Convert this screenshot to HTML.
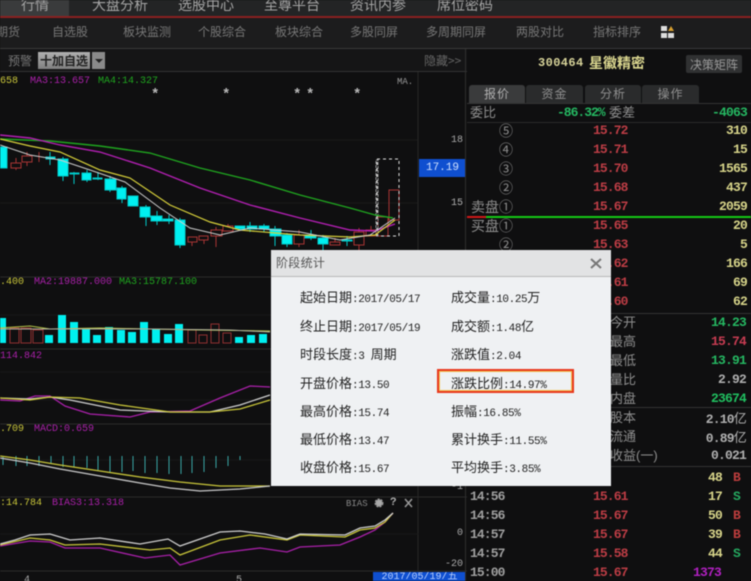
<!DOCTYPE html>
<html><head><meta charset="utf-8"><style>
html,body{margin:0;padding:0;background:#0f0f10;}
#p{position:relative;width:751px;height:581px;overflow:hidden;background:#0f0f10;font-family:"Liberation Mono","WenQuanYi Zen Hei","Noto Sans CJK SC",monospace;filter:blur(.5px);}
.a{position:absolute;}
.t{position:absolute;line-height:16px;height:16px;white-space:nowrap;font-size:11px;}
.n{color:#777;font-family:"Liberation Sans","Noto Sans CJK SC",sans-serif;font-size:12px;}
.nv{top:24px;}
.top{top:-3px;color:#a5a5a5;font-family:"Liberation Sans","Noto Sans CJK SC",sans-serif;font-size:14px;}
.r{color:#bd3d45;font-weight:bold;font-size:13px;letter-spacing:-.9px;left:593px;}
.y{color:#d8d58a;font-weight:bold;font-size:13px;letter-spacing:-.8px;text-align:right;right:4px;}
.l{color:#8e8e8e;font-family:"Liberation Sans","Noto Sans CJK SC",sans-serif;font-size:13px;}
.c{color:#8e8e8e;left:499px;font-family:"Liberation Sans","Noto Sans CJK SC",sans-serif;font-size:14px;}
.g{color:#25b862;font-weight:bold;font-size:13px;letter-spacing:-.8px;text-align:right;right:5px;}
.w{color:#b0b0b0;font-weight:bold;font-size:13px;letter-spacing:-.8px;text-align:right;right:5px;}
.tm{color:#a0a0a0;left:470px;font-size:13px;letter-spacing:-.9px;font-weight:bold;}
.d{color:#222;font-size:11px;font-family:"Liberation Mono",monospace;letter-spacing:-.4px;}
.d i{font-style:normal;font-weight:normal;font-size:13px;letter-spacing:0;font-family:"Noto Sans CJK SC",sans-serif;}
.tb{position:absolute;top:85px;height:18px;background:#2a2b2c;border-radius:3px 3px 0 0;color:#8f8f8f;font:12px/18px "Liberation Sans","Noto Sans CJK SC",sans-serif;text-align:center;letter-spacing:1px;}
.s{color:#d8d58a;font-weight:bold;font-size:13px;letter-spacing:-.8px;left:708px;}
.b{color:#bd3d3d;font-weight:bold;font-size:13px;left:733px;}
.q{color:#25a860;font-weight:bold;font-size:13px;left:733px;}
.st{color:#bbb;font-size:14px;font-weight:bold;top:87px;}
</style></head><body><div id="p">
<div class="a" style="left:0;top:0;width:751px;height:16px;background:#232425"></div>
<div class="a" style="left:0;top:0;width:69px;height:16px;background:#3a3b3c"></div>
<div class="a" style="left:0;top:16px;width:751px;height:2px;background:#8a2020"></div>
<div class="a" style="left:0;top:18px;width:751px;height:30px;background:#1c1c1d"></div>
<div class="a" style="left:0;top:48px;width:751px;height:1px;background:#3a3a3a"></div>
<div class="a" style="left:0;top:49px;width:467px;height:22px;background:#151516"></div>
<div class="a" style="left:0;top:71px;width:467px;height:1px;background:#333"></div>

<span class="t top" style="left:21px">行情</span>
<span class="t top" style="left:92px">大盘分析</span>
<span class="t top" style="left:178px">选股中心</span>
<span class="t top" style="left:264px">至尊平台</span>
<span class="t top" style="left:350px">资讯内参</span>
<span class="t top" style="left:437px">席位密码</span>

<span class="t n nv" style="left:-4px">期货</span>
<span class="t n nv" style="left:52px">自选股</span>
<span class="t n nv" style="left:123px">板块监测</span>
<span class="t n nv" style="left:198px">个股综合</span>
<span class="t n nv" style="left:275px">板块综合</span>
<span class="t n nv" style="left:350px">多股同屏</span>
<span class="t n nv" style="left:426px">多周期同屏</span>
<span class="t n nv" style="left:516px">两股对比</span>
<span class="t n nv" style="left:593px">指标排序</span>
<svg class="a" style="left:660px;top:25px" width="15" height="15"><rect x="1" y="1" width="6" height="5" fill="#ddd"/><rect x="1" y="8" width="6" height="5" fill="#ddd"/><rect x="8" y="8" width="6" height="5" fill="#ddd"/><path d="M8 6h6L11 1z" fill="#d8a030"/></svg>

<span class="t" style="left:8px;top:53px;color:#777;font-size:12px;font-family:'Noto Sans CJK SC',sans-serif">预警</span>
<div class="a" style="left:38px;top:52px;width:52px;height:17px;background:linear-gradient(#b0b0b0,#808080);color:#222;font:bold 12px/17px 'Noto Sans CJK SC',sans-serif;text-align:center">十加自选</div>
<div class="a" style="left:92px;top:52px;width:13px;height:17px;background:#8a8a8a"></div>
<div class="a" style="left:95px;top:59px;width:0;height:0;border:4px solid transparent;border-top:4px solid #222"></div>
<span class="t" style="left:424px;top:53px;color:#666;font-size:12px;font-family:'Noto Sans CJK SC',sans-serif">隐藏&gt;&gt;</span>

<!-- chart -->
<svg class="a" style="left:0;top:72px" width="467" height="509" viewBox="0 72 467 509">
<g stroke="#1a1a1a"><path d="M0 140H418M0 203H418"/><path d="M418 72V581" stroke="#262626"/></g>
<g stroke="#2a2a2a"><path d="M0 277H467M0 349H467M0 424H467M0 497H467M0 571H467"/></g>
<g stroke="#181818"><path d="M0 315H418M0 372H418M0 400H418M0 460H418M0 534H418"/></g>
<g fill="#00f0f0" stroke="#00c8c8">
<path d="M50 152V165M63 157V181M74 172V184M87 170V182M98 172V180M110 176V192M122 186V203M146 205V226M157 211V225M169 215V224M180 218V248M250 222V232M264 224V232M275 226V246M287 233V247M311 230V240M323 235V250M347 236V246" fill="none"/>
<rect x="0" y="147" width="7" height="21"/><rect x="46" y="157" width="9" height="2"/><rect x="58" y="159" width="10" height="17"/><rect x="70" y="173" width="9" height="1"/><rect x="82" y="173" width="9" height="7"/><rect x="93" y="178" width="9" height="1"/><rect x="105" y="179" width="11" height="11"/><rect x="117" y="188" width="9" height="11"/><rect x="128" y="196" width="10" height="10"/><rect x="140" y="207" width="10" height="10"/><rect x="151" y="216" width="11" height="5"/><rect x="163" y="219" width="10" height="2"/><rect x="175" y="220" width="10" height="25"/><rect x="235" y="226" width="10" height="3"/><rect x="247" y="226" width="10" height="3"/><rect x="259" y="226" width="10" height="3"/><rect x="270" y="229" width="11" height="7"/><rect x="282" y="235" width="10" height="9"/><rect x="305" y="235" width="11" height="3"/><rect x="318" y="238" width="10" height="6"/><rect x="342" y="240" width="10" height="1"/>
</g>
<g fill="none" stroke="#a83434">
<path d="M16 158V163M16 168V170M27 152V156M27 162V166M39 152V162M216 227V230M216 236V247M192 242V246M204 240V244M228 224V226M299 230V235M299 244V247M335 238V242M359 228V232M359 245V250M371 226V230"/>
<rect x="11" y="163" width="10" height="5"/><rect x="22" y="156" width="10" height="6"/><rect x="188" y="237" width="9" height="5"/><rect x="199" y="236" width="9" height="4"/><rect x="211" y="230" width="11" height="6"/><rect x="223" y="226" width="10" height="5"/><rect x="294" y="235" width="10" height="9"/><rect x="330" y="242" width="10" height="3"/><rect x="354" y="232" width="10" height="13"/><rect x="366" y="230" width="10" height="6"/><rect x="378" y="217" width="10" height="19"/><rect x="389" y="190" width="10" height="30"/>
</g>
<rect x="377" y="159" width="22" height="77" fill="none" stroke="#ddd" stroke-dasharray="3 3"/>
<rect x="376" y="160" width="2" height="76" fill="none" stroke="#999" stroke-dasharray="3 1"/>
<g fill="none" stroke-width="1.2">
<polyline stroke="#1fa51f" stroke-width="1.4" points="0,139 50,141 100,146 150,153 200,168 250,180 300,195 350,208 375,215 393,218"/>
<polyline stroke="#b31fb3" stroke-width="1.4" points="0,135 30,138 60,145 100,152 150,168 200,188 250,205 300,218 350,230 375,231 395,224"/>
<polyline stroke="#d6cf3a" points="0,139 30,146 60,152 100,170 130,178 170,205 210,222 240,230 300,235 350,237 375,235 395,220"/>
<polyline stroke="#cccccc" stroke-width="1" points="0,145 30,155 60,160 90,170 125,182 160,208 190,228 220,235 250,228 300,232 340,240 370,235 395,218"/>
</g>
<!-- volume -->
<g fill="#00f0f0">
<rect x="0" y="318" width="6" height="25"/><rect x="45" y="335" width="8" height="8"/><rect x="58" y="315" width="8" height="28"/><rect x="70" y="322" width="8" height="21"/><rect x="82" y="328" width="8" height="15"/><rect x="93" y="335" width="8" height="8"/><rect x="105" y="327" width="8" height="16"/><rect x="117" y="330" width="8" height="13"/><rect x="128" y="332" width="8" height="11"/><rect x="140" y="322" width="8" height="21"/><rect x="152" y="329" width="8" height="14"/><rect x="164" y="334" width="8" height="9"/><rect x="175" y="324" width="8" height="19"/><rect x="235" y="337" width="8" height="6"/><rect x="247" y="335" width="8" height="8"/><rect x="259" y="334" width="8" height="9"/>
</g>
<g fill="none" stroke="#8f3030"><rect x="10" y="328" width="9" height="15"/><rect x="21" y="328" width="10" height="15"/><rect x="33" y="330" width="10" height="13"/><rect x="188" y="330" width="8" height="13"/><rect x="199" y="335" width="8" height="8"/><rect x="211" y="324" width="8" height="19"/><rect x="223" y="333" width="8" height="10"/></g>
<polyline fill="none" stroke="#b9c84a" points="0,328 30,326 50,329 100,328 150,329 200,330 270,331"/>
<polyline fill="none" stroke="#b0b0a0" points="0,329 50,329 100,329 150,329 230,330 270,332"/>
<!-- KDJ -->
<g fill="none" stroke-width="1.3">
<polyline stroke="#a920a9" points="0,400 20,401 35,396 50,396 65,406 90,414 130,417 150,412 190,411 220,398 250,386 270,387"/>
<polyline stroke="#cfcfcf" points="0,398 30,399 50,397 70,400 120,410 170,412 210,412 240,405 270,395"/>
<polyline stroke="#c9c63a" points="0,398 30,400 50,397 80,398 120,405 170,412 210,412 240,409 270,400"/>
</g>
<!-- MACD -->
<path stroke="#3aa5a5" fill="none" d="M3 456V465M16 456V466M27 456V466M39 456V466M51 456V464M63 456V467M74 456V467M87 456V468M98 456V470M110 456V472M122 456V472M133 456V471M145 456V473M157 456V473M169 456V474M181 456V474M192 456V473M204 456V472M216 456V468M228 456V466M240 456V460"/>
<g fill="none" stroke-width="1.3">
<polyline stroke="#c9c63a" points="0,456 30,460 60,465 100,471 140,477 180,482 220,486 270,486"/>
<polyline stroke="#c8c8c8" points="0,458 30,463 60,469 100,476 140,483 170,488 200,491 240,489 270,486"/>
</g>
<!-- BIAS -->
<g fill="none" stroke-width="1.3">
<polyline stroke="#a920a9" points="0,546 30,541 50,542 65,548 100,548 145,558 170,555 180,565 220,553 260,548 287,552 300,547 340,545 360,537 375,530 385,522 393,513"/>
<polyline stroke="#c9c63a" points="0,545 30,538 50,540 65,545 100,544 150,550 170,548 180,555 220,540 250,535 287,540 300,535 345,537 360,530 375,528 385,522 393,513"/>
<polyline stroke="#cfcfcf" points="0,544 15,540 30,535 50,534 70,540 100,538 140,544 168,539 180,546 220,532 240,531 265,534 287,539 300,534 345,535 360,528 375,526 385,520 393,513"/>
</g>
<g stroke="#999" fill="none" stroke-width="1.5"><path d="M405 499L412 507M412 499L405 507"/></g>
<circle cx="379" cy="503" r="3.5" fill="#aaa" stroke="#999" stroke-width="2" stroke-dasharray="2 1"/>
</svg>

<!-- chart labels -->
<span class="t" style="left:0;top:74px;color:#c9c63a;font-size:10px">658</span>
<span class="t" style="left:30px;top:74px;color:#a920a9;font-size:10px">MA3:13.657</span>
<span class="t" style="left:98px;top:74px;color:#1fa51f;font-size:10px">MA4:14.327</span>
<span class="t st" style="left:151px">*</span>
<span class="t st" style="left:222px">*</span>
<span class="t st" style="left:293px">*</span>
<span class="t st" style="left:306px">*</span>
<span class="t st" style="left:353px">*</span>
<span class="t" style="left:397px;top:74px;color:#999;font-size:9px">MA.</span>
<span class="t" style="left:451px;top:133px;color:#a8a8a8;font-size:10px">18</span>
<span class="t" style="left:451px;top:196px;color:#b0b0b0;font-size:10px">15</span>
<div class="a" style="left:419px;top:159px;width:47px;height:18px;background:#0f4fd0;color:#cfe0ff;font-size:11px;line-height:18px;text-align:center">17.19</div>
<span class="t" style="left:0;top:275px;color:#c9c63a;font-size:10px">.400</span>
<span class="t" style="left:34px;top:275px;color:#a920a9;font-size:10px">MA2:19887.000</span>
<span class="t" style="left:119px;top:275px;color:#1fa51f;font-size:10px">MA3:15787.100</span>
<span class="t" style="left:0;top:349px;color:#a920a9;font-size:10px">114.842</span>
<span class="t" style="left:0;top:422px;color:#c9c63a;font-size:10px">.709</span>
<span class="t" style="left:34px;top:422px;color:#a920a9;font-size:10px">MACD:0.659</span>
<span class="t" style="left:0;top:496px;color:#c9c63a;font-size:10px">:14.784</span>
<span class="t" style="left:52px;top:496px;color:#a920a9;font-size:10px">BIAS3:13.318</span>
<span class="t" style="left:346px;top:496px;color:#888;font-size:9px">BIAS</span>
<span class="t" style="left:390px;top:495px;color:#aaa;font-weight:bold;font-size:11px">?</span>
<span class="t" style="left:24px;top:573px;color:#aaa;font-size:10px">4</span>
<span class="t" style="left:236px;top:573px;color:#aaa;font-size:10px">5</span>
<span class="t" style="left:451px;top:480px;color:#aaa;font-size:10px">-1</span>
<span class="t" style="left:457px;top:526px;color:#aaa;font-size:10px">0</span>
<span class="t" style="left:445px;top:557px;color:#aaa;font-size:10px">-20</span>
<div class="a" style="left:373px;top:572px;width:93px;height:9px;background:#0f4fd0;color:#b8d0ff;font:10px/12px 'Liberation Mono','Noto Sans CJK SC',monospace;text-align:center;overflow:hidden">2017/05/19/五</div>

<!-- right panel -->
<div class="a" style="left:465px;top:49px;width:1px;height:532px;background:#2e2e2e"></div>
<span class="t" style="left:538px;top:55px;color:#d8d49a;font-weight:bold;font-size:12px;letter-spacing:.4px">300464</span>
<span class="t" style="left:589px;top:55px;color:#dcd890;font-weight:bold;font-size:14px;font-family:'Noto Sans CJK SC',sans-serif">星徽精密</span>
<div class="a" style="left:686px;top:55px;width:56px;height:18px;background:#303132;border-radius:2px;color:#999;font:12px/19px 'Noto Sans CJK SC',sans-serif;text-align:center">决策矩阵</div>
<div class="tb" style="left:469px;width:56px;background:#3a3b3c;color:#b0b0b0">报价</div>
<div class="tb" style="left:526px;width:57px">资金</div>
<div class="tb" style="left:585px;width:56px">分析</div>
<div class="tb" style="left:642px;width:57px">操作</div>
<div class="a" style="left:467px;top:103px;width:284px;height:1px;background:#333"></div>
<div class="a" style="left:467px;top:122px;width:284px;height:1px;background:#2a2a2a"></div>

<span class="t c" style="left:470px;top:105px;font-size:13px">委比</span>
<span class="t" style="left:557px;top:105px;color:#25b862;font-weight:bold;font-size:13px;letter-spacing:-1px">-86.32%</span>
<span class="t c" style="left:609px;top:105px;font-size:13px">委差</span>
<span class="t g" style="right:4px;top:105px">-4063</span>

<span class="t c" style="top:123px">⑤</span><span class="t r" style="top:123px">15.72</span><span class="t y" style="top:123px">310</span>
<span class="t c" style="top:142px">④</span><span class="t r" style="top:142px">15.71</span><span class="t y" style="top:142px">15</span>
<span class="t c" style="top:161px">③</span><span class="t r" style="top:161px">15.70</span><span class="t y" style="top:161px">1565</span>
<span class="t c" style="top:180px">②</span><span class="t r" style="top:180px">15.68</span><span class="t y" style="top:180px">437</span>
<span class="t c" style="left:471px;top:199px">卖盘①</span><span class="t r" style="top:199px">15.67</span><span class="t y" style="top:199px">2059</span>
<div class="a" style="left:467px;top:216px;width:284px;height:2px;background:#14c814"></div>
<div class="a" style="left:467px;top:216px;width:19px;height:2px;background:#d01818"></div>
<span class="t c" style="left:471px;top:218px">买盘①</span><span class="t r" style="top:218px">15.65</span><span class="t y" style="top:218px">20</span>
<span class="t c" style="top:237px">②</span><span class="t r" style="top:237px">15.63</span><span class="t y" style="top:237px">5</span>
<span class="t r" style="top:256px">15.62</span><span class="t y" style="top:256px">166</span>
<span class="t r" style="top:275px">15.61</span><span class="t y" style="top:275px">69</span>
<span class="t r" style="top:294px">15.60</span><span class="t y" style="top:294px">62</span>
<div class="a" style="left:467px;top:313px;width:284px;height:1px;background:#333"></div>

<span class="t l" style="left:610px;top:315px">今开</span><span class="t g" style="top:315px">14.23</span>
<span class="t l" style="left:610px;top:334px">最高</span><span class="t g" style="top:334px;color:#c83c52">15.74</span>
<span class="t l" style="left:610px;top:353px">最低</span><span class="t g" style="top:353px">13.91</span>
<span class="t l" style="left:610px;top:372px">量比</span><span class="t w" style="top:372px">2.92</span>
<span class="t l" style="left:610px;top:391px">内盘</span><span class="t g" style="top:391px;color:#20c060">23674</span>
<div class="a" style="left:467px;top:407px;width:284px;height:1px;background:#333"></div>
<span class="t l" style="left:610px;top:410px">股本</span><span class="t w" style="top:410px;right:5px">2.10<span style="font-family:'Noto Sans CJK SC',sans-serif;font-weight:normal;font-size:13px">亿</span></span>
<span class="t l" style="left:610px;top:429px">流通</span><span class="t w" style="top:429px;right:5px">0.89<span style="font-family:'Noto Sans CJK SC',sans-serif;font-weight:normal;font-size:13px">亿</span></span>
<span class="t l" style="left:610px;top:448px">收益(一)</span><span class="t w" style="top:448px;right:5px">0.021</span>
<div class="a" style="left:467px;top:466px;width:284px;height:1px;background:#333"></div>

<span class="t s" style="top:470px">48</span><span class="t b" style="top:470px">B</span>
<span class="t tm" style="top:489px">14:56</span><span class="t r" style="top:489px">15.61</span><span class="t s" style="top:489px">17</span><span class="t q" style="top:489px">S</span>
<span class="t tm" style="top:508px">14:56</span><span class="t r" style="top:508px">15.67</span><span class="t s" style="top:508px">50</span><span class="t b" style="top:508px">B</span>
<span class="t tm" style="top:527px">14:57</span><span class="t r" style="top:527px">15.67</span><span class="t s" style="top:527px">39</span><span class="t b" style="top:527px">B</span>
<span class="t tm" style="top:546px">14:57</span><span class="t r" style="top:546px">15.58</span><span class="t s" style="top:546px">44</span><span class="t q" style="top:546px">S</span>
<span class="t tm" style="top:565px">15:00</span><span class="t r" style="top:565px">15.67</span><span class="t" style="left:693px;top:565px;color:#b020c0;font-weight:bold;font-size:13px;letter-spacing:-.8px">1373</span>

<!-- dialog -->
<div class="a" style="left:271px;top:250px;width:340px;height:236px;background:#eff1f3"></div>
<div class="a" style="left:271px;top:250px;width:340px;height:27px;background:#e2e3e4;border-bottom:1px solid #b8b8b8;box-sizing:border-box"></div>
<span class="t" style="left:276px;top:255px;color:#555;font-size:12px;font-family:'Noto Sans CJK SC',sans-serif;letter-spacing:.3px">阶段统计</span>
<svg class="a" style="left:589px;top:257px" width="14" height="13"><path d="M2 2L12 11M12 2L2 11" stroke="#777" stroke-width="2"/></svg>

<span class="t d" style="left:300px;top:289px"><i>起始日期</i>:2017/05/17</span>
<span class="t d" style="left:300px;top:318px"><i>终止日期</i>:2017/05/19</span>
<span class="t d" style="left:300px;top:346px"><i>时段长度</i>:3 <i>周期</i></span>
<span class="t d" style="left:300px;top:375px"><i>开盘价格</i>:13.50</span>
<span class="t d" style="left:300px;top:403px"><i>最高价格</i>:15.74</span>
<span class="t d" style="left:300px;top:431px"><i>最低价格</i>:13.47</span>
<span class="t d" style="left:300px;top:459px"><i>收盘价格</i>:15.67</span>
<span class="t d" style="left:451px;top:289px"><i>成交量</i>:10.25<i>万</i></span>
<span class="t d" style="left:451px;top:318px"><i>成交额</i>:1.48<i>亿</i></span>
<span class="t d" style="left:451px;top:346px"><i>涨跌值</i>:2.04</span>
<div class="a" style="left:437px;top:369px;width:137px;height:24px;box-sizing:border-box;border:2px solid #e8381c;outline:1px solid #f0c050;outline-offset:-3px"></div>
<span class="t d" style="left:451px;top:375px"><i>涨跌比例</i>:14.97%</span>
<span class="t d" style="left:451px;top:403px"><i>振幅</i>:16.85%</span>
<span class="t d" style="left:451px;top:431px"><i>累计换手</i>:11.55%</span>
<span class="t d" style="left:451px;top:459px"><i>平均换手</i>:3.85%</span>
</div></body></html>
